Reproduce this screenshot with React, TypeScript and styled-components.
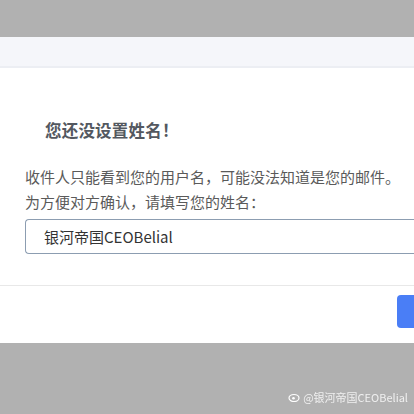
import * as React from "react"
import styled, { createGlobalStyle } from "styled-components"

const GlobalStyle = createGlobalStyle`
  html, body {
    margin: 0;
    padding: 0;
    background: #b1b1b1;
    overflow: hidden;
  }
  body {
    font-family: "Microsoft YaHei", "Noto Sans CJK SC", "Noto Sans", sans-serif;
  }
`

const Screen = styled.div`
  width: 414px;
  height: 414px;
  overflow: hidden;
  position: relative;
  padding-top: 37px;
  box-sizing: border-box;
`

const Modal = styled.div`
  width: 500px;
  background: #ffffff;
  display: flex;
  flex-direction: column;
`

const Header = styled.div`
  height: 29px;
  background: #f5f6fa;
  border-bottom: 2px solid #eceef3;
`

const Body = styled.div`
  padding: 51px 0 31px 25px;
  border-bottom: 1px solid #e8e8e8;
`

const Title = styled.h2`
  margin: 0 0 23px 20px;
  font-size: 16.5px;
  font-weight: 700;
  color: #535860;
  line-height: 22px;
  letter-spacing: 0.2px;
`

const Line = styled.p`
  margin: 0;
  font-size: 15px;
  line-height: 25px;
  color: #5a5a5a;
`

const NameInput = styled.div`
  margin-top: 5px;
  height: 33px;
  border: 1px solid #8c9db1;
  border-right: none;
  border-radius: 4px 0 0 4px;
  display: flex;
  align-items: center;
  padding-left: 18px;
  font-size: 15px;
  color: #333;
`

const Footer = styled.div`
  height: 57px;
  display: flex;
  align-items: flex-start;
  padding-top: 9px;
  padding-left: 397px;
  box-sizing: border-box;
`

const PrimaryButton = styled.button`
  width: 84px;
  height: 33px;
  border: none;
  border-radius: 4px;
  background: #4a7ef6;
  color: #fff;
  font-size: 14px;
`

const Watermark = styled.div`
  position: absolute;
  right: 6px;
  bottom: 9px;
  display: flex;
  align-items: center;
  gap: 3px;
  color: rgba(255, 255, 255, 0.8);
  font-size: 11px;
  filter: blur(0.7px);
`

export default function App() {
  return (
    <Screen>
      <GlobalStyle />
      <Modal>
        <Header />
        <Body>
          <Title>您还没设置姓名！</Title>
          <Line>收件人只能看到您的用户名，可能没法知道是您的邮件。</Line>
          <Line>为方便对方确认，请填写您的姓名：</Line>
          <NameInput>银河帝国CEOBelial</NameInput>
        </Body>
        <Footer>
          <PrimaryButton>确定</PrimaryButton>
        </Footer>
      </Modal>
      <Watermark>
        <svg width="12" height="10" viewBox="0 0 12 10">
          <ellipse cx="6" cy="6" rx="5" ry="3.5" fill="none" stroke="#fff" strokeWidth="1.2" />
          <circle cx="5.5" cy="6.3" r="1.3" fill="#fff" />
        </svg>
        <span>@银河帝国CEOBelial</span>
      </Watermark>
    </Screen>
  )
}
